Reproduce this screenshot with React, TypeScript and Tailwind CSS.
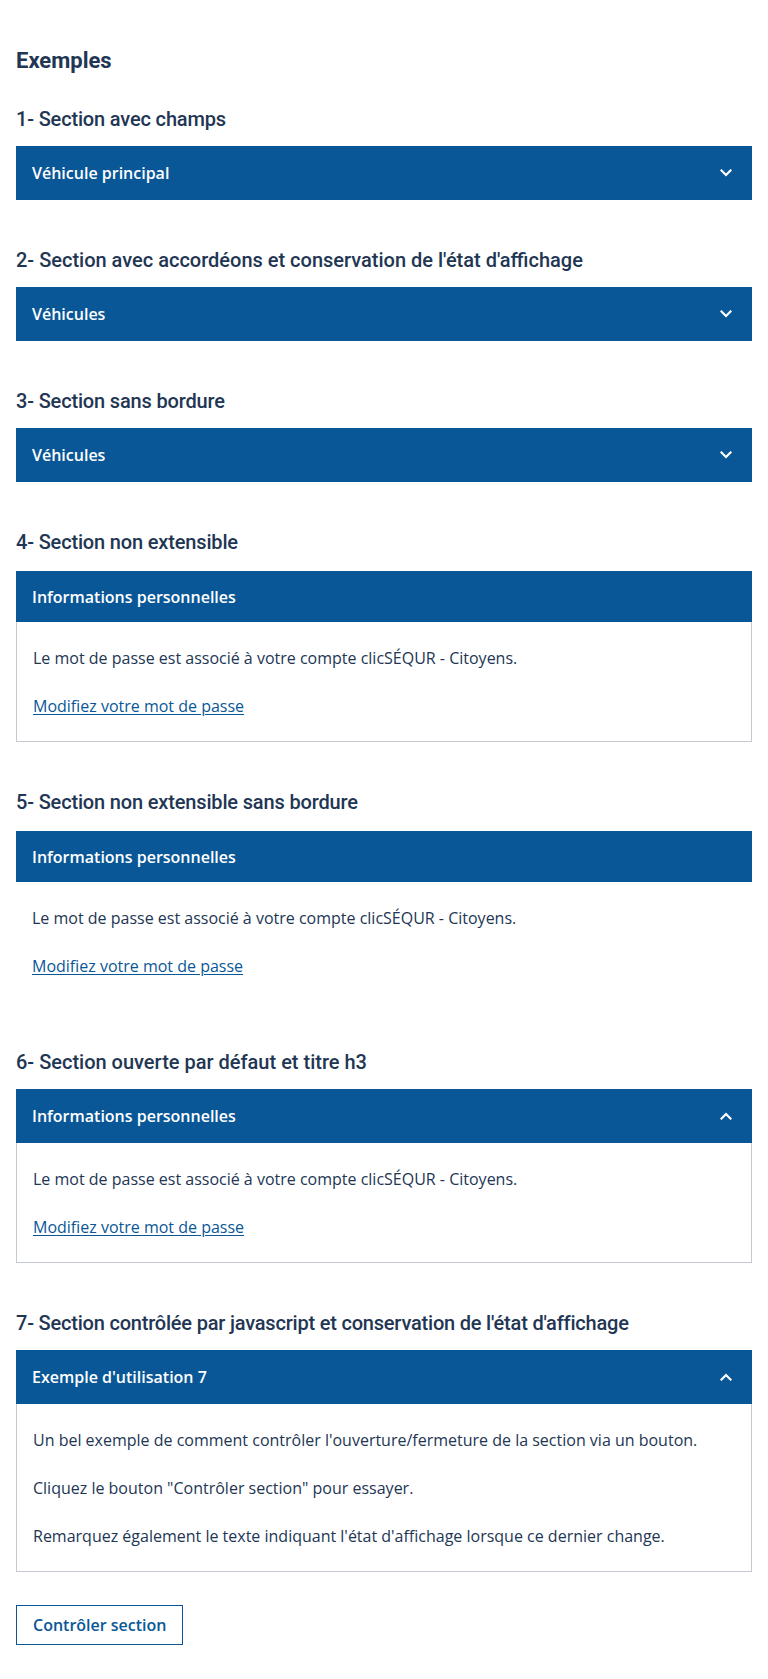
import { useState } from "react";

const headingBase = "font-['Roboto',sans-serif] text-[20px] leading-[28px] font-medium text-[#223654]";

function Heading({ children, tight = true, expandable = true }: { children: React.ReactNode; tight?: boolean; expandable?: boolean }) {
  return (
    <h3 className={`${headingBase} ${tight ? "tracking-[-0.16px]" : ""} ${expandable ? "mb-[13px]" : "mb-[15px]"}`}>
      {children}
    </h3>
  );
}

function Chevron({ up }: { up?: boolean }) {
  return (
    <svg width="12" height="8" viewBox="0 0 12 8" fill="none" className={up ? "rotate-180" : ""}>
      <path d="M1.5 1.5 L6 6 L10.5 1.5" stroke="white" strokeWidth="2.2" strokeLinecap="square" />
    </svg>
  );
}

function Bar({ title, open, expandable = true, onToggle }: { title: string; open?: boolean; expandable?: boolean; onToggle?: () => void }) {
  return (
    <div
      onClick={onToggle}
      className={`flex items-center justify-between bg-[#095797] px-4 text-white font-['Open_Sans',sans-serif] text-[16px] leading-6 font-semibold ${expandable ? "py-[15px] cursor-pointer" : "py-[13.5px]"}`}
    >
      <span>{title}</span>
      {expandable && (
        <span className="pr-[4px]">
          <Chevron up={open} />
        </span>
      )}
    </div>
  );
}

function Body({ children, border = true }: { children: React.ReactNode; border?: boolean }) {
  return (
    <div
      className={`px-4 pt-6 font-['Open_Sans',sans-serif] text-[16px] leading-6 text-[#223654] flex flex-col gap-6 ${border ? "border border-t-0 border-[#c5cad2] pb-[23px]" : "pb-6"}`}
    >
      {children}
    </div>
  );
}

function PasswordText() {
  return (
    <>
      <p>Le mot de passe est associé à votre compte clicSÉQUR - Citoyens.</p>
      <p>
        <a href="#" className="text-[#095797] underline underline-offset-2">
          Modifiez votre mot de passe
        </a>
      </p>
    </>
  );
}

export default function App() {
  const [open7, setOpen7] = useState(true);
  const [open6, setOpen6] = useState(true);

  return (
    <div className="min-h-screen bg-white px-4 pt-[47px] pb-8">
      <h2 className="font-['Roboto',sans-serif] text-[22px] leading-[28px] font-bold text-[#223654] mb-[30px]">Exemples</h2>

      {/* 1 */}
      <section className="mb-[46px]">
        <Heading>1- Section avec champs</Heading>
        <Bar title="Véhicule principal" />
      </section>

      {/* 2 */}
      <section className="mb-[46px]">
        <Heading tight={false}>2- Section avec accordéons et conservation de l'état d'affichage</Heading>
        <Bar title="Véhicules" />
      </section>

      {/* 3 */}
      <section className="mb-[46px]">
        <Heading>3- Section sans bordure</Heading>
        <Bar title="Véhicules" />
      </section>

      {/* 4 */}
      <section className="mb-[46px]">
        <Heading expandable={false}>4- Section non extensible</Heading>
        <Bar title="Informations personnelles" expandable={false} />
        <Body>
          <PasswordText />
        </Body>
      </section>

      {/* 5 */}
      <section className="mb-[46px]">
        <Heading expandable={false}>5- Section non extensible sans bordure</Heading>
        <Bar title="Informations personnelles" expandable={false} />
        <Body border={false}>
          <PasswordText />
        </Body>
      </section>

      {/* 6 */}
      <section className="mb-[46px]">
        <Heading tight={false}>6- Section ouverte par défaut et titre h3</Heading>
        <Bar title="Informations personnelles" open={open6} onToggle={() => setOpen6(!open6)} />
        {open6 && (
          <Body>
            <PasswordText />
          </Body>
        )}
      </section>

      {/* 7 */}
      <section className="mb-[33px]">
        <h3 className={`${headingBase} tracking-[-0.2px] mb-[13px]`}>
          7- Section contrôlée par javascript et conservation de l'état d'affichage
        </h3>
        <Bar title="Exemple d'utilisation 7" open={open7} onToggle={() => setOpen7(!open7)} />
        {open7 && (
          <Body>
            <p>Un bel exemple de comment contrôler l'ouverture/fermeture de la section via un bouton.</p>
            <p>Cliquez le bouton "Contrôler section" pour essayer.</p>
            <p>Remarquez également le texte indiquant l'état d'affichage lorsque ce dernier change.</p>
          </Body>
        )}
      </section>

      <button
        onClick={() => setOpen7(!open7)}
        className="h-10 px-4 border border-[#095797] font-['Open_Sans',sans-serif] text-[16px] font-semibold text-[#095797] bg-white"
      >
        Contrôler section
      </button>
    </div>
  );
}
